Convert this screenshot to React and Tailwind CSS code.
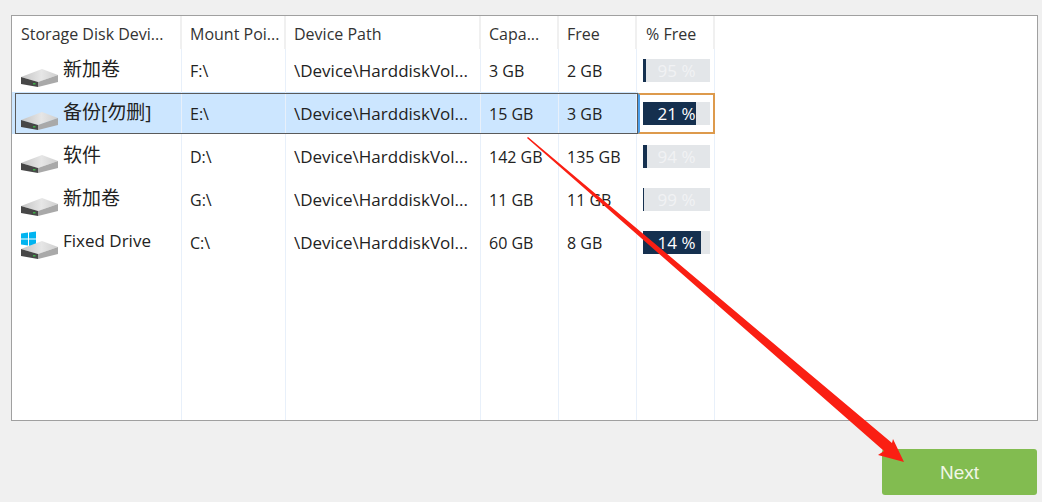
import React from 'react';

const gridCols = 'grid grid-cols-[170px_104px_195px_78px_78px_78px]';
const font = { fontFamily: '"Open Sans", "Noto Sans CJK SC", sans-serif' };
const cell = 'relative flex items-center border-r border-[#e8f0fa] pl-[8px]';

const drives = [
  { name: '新加卷', mount: 'F:\\', capacity: '3 GB', free: '2 GB', pct: 95, used: 5 },
  { name: '备份[勿删]', mount: 'E:\\', capacity: '15 GB', free: '3 GB', pct: 21, used: 79, selected: true },
  { name: '软件', mount: 'D:\\', capacity: '142 GB', free: '135 GB', pct: 94, used: 6 },
  { name: '新加卷', mount: 'G:\\', capacity: '11 GB', free: '11 GB', pct: 99, used: 1 },
  { name: 'Fixed Drive', mount: 'C:\\', capacity: '60 GB', free: '8 GB', pct: 14, used: 86, windows: true },
];

const headers = ['Storage Disk Devi...', 'Mount Poi...', 'Device Path', 'Capa...', 'Free', '% Free'];

const DriveIcon = ({ windows }) => (
  <svg width="38" height="40" viewBox="0 0 38 40" className="shrink-0">
    <defs>
      <linearGradient id="driveTop" x1="0" y1="0" x2="1" y2="0">
        <stop offset="0" stopColor="#c4c4c4" />
        <stop offset="0.55" stopColor="#e6e6e6" />
        <stop offset="1" stopColor="#cfcfcf" />
      </linearGradient>
    </defs>
    {windows && (
      <g fill="#00b4f0">
        <path d="M0 12.6 L7 11.6 V17.6 H0 Z" />
        <path d="M8 11.4 L15 10.4 V17.6 H8 Z" />
        <path d="M0 18.6 H7 V24.6 L0 23.6 Z" />
        <path d="M8 18.6 H15 V25.6 L8 24.8 Z" />
      </g>
    )}
    <path d="M0 28 L21 20 L37 26 L17 33 Z" fill="url(#driveTop)" />
    <path d="M17 33 L37 26 V33 L17 38 Z" fill="#a9a9a9" />
    <path d="M0 28 L17 33 V38 L0 35 Z" fill="#474747" />
    <rect x="12" y="34" width="2.5" height="1.5" fill="#3fae49" />
  </svg>
);

const PercentBar = ({ pct, used }) => (
  <div className="relative h-[23px] w-[67px] bg-[#e3e6e9]">
    <div className="h-full bg-[#15304f]" style={{ width: `${used}%` }} />
    <span className={`absolute inset-0 flex items-center justify-center text-[17px] ${pct > 50 ? 'text-[#f1f2f4]' : 'text-white'}`}>
      {pct} %
    </span>
  </div>
);

const DriveRow = ({ drive }) => (
  <div className={`${gridCols} relative h-[43px] text-[16px] text-[#222222]`}>
    {drive.selected && <div className="absolute left-0 top-0 h-[42px] w-[626px] bg-[#cce6ff]" />}
    <div className="relative flex border-r border-[#e8f0fa] pl-[9px]">
      <DriveIcon windows={drive.windows} />
      <span className={`ml-[4px] mt-[4px] leading-[32px] ${drive.windows ? 'text-[17px]' : 'text-[19px]'}`}>{drive.name}</span>
    </div>
    <div className={cell}>{drive.mount}</div>
    <div className={`${cell} text-[17px]`}>\Device\HarddiskVol...</div>
    <div className={cell}>{drive.capacity}</div>
    <div className={cell}>{drive.free}</div>
    <div className="relative flex items-center border-r border-[#e8f0fa] pl-[6px]">
      <PercentBar pct={drive.pct} used={drive.used} />
    </div>
    {drive.selected && (
      <>
        <div className="pointer-events-none absolute left-[3px] top-[1px] h-[41px] w-[623px] border border-[#5a5a5a]" />
        <div className="pointer-events-none absolute left-[626px] top-[1px] h-[41px] w-[77px] border-2 border-[#dd9a4c] border-l-[#4a9eea]" />
      </>
    )}
  </div>
);

export default function App() {
  return (
    <div className="relative h-[502px] w-[1042px] overflow-hidden bg-[#f0f0f0] pl-[11px] pt-[15px]" style={font}>
      <div className="flex h-[406px] w-[1027px] flex-col border border-[#a0a0a0] bg-white">
        <div className={`${gridCols} h-[33px] text-[16px] text-[#333333]`}>
          {headers.map((h, i) => (
            <div key={h} className={`flex items-center border-r-2 border-[#f0f0f0] pt-[3px] ${i === 0 || i === 5 ? 'pl-[9px]' : 'pl-[8px]'}`}>
              {h}
            </div>
          ))}
        </div>
        {drives.map((d, i) => <DriveRow key={i} drive={d} />)}
        <div className={`${gridCols} flex-1`}>
          {headers.map((h) => <div key={h} className="border-r border-[#e8f0fa]" />)}
        </div>
      </div>

      <div className="absolute left-[882px] top-[449px] flex h-[46px] w-[155px] items-center justify-center rounded-[3px] bg-[#82bc50] pt-[2px] font-['Liberation_Sans',sans-serif] text-[19px] text-[#f1f6e6]">
        Next
      </div>

      {/* red annotation arrow */}
      <svg className="pointer-events-none absolute left-0 top-0" width="1042" height="502">
        <polygon points="527,138 528,137 892,443 893,439 904,462 878,455 884,451" fill="#fa1f13" />
      </svg>
    </div>
  );
}
